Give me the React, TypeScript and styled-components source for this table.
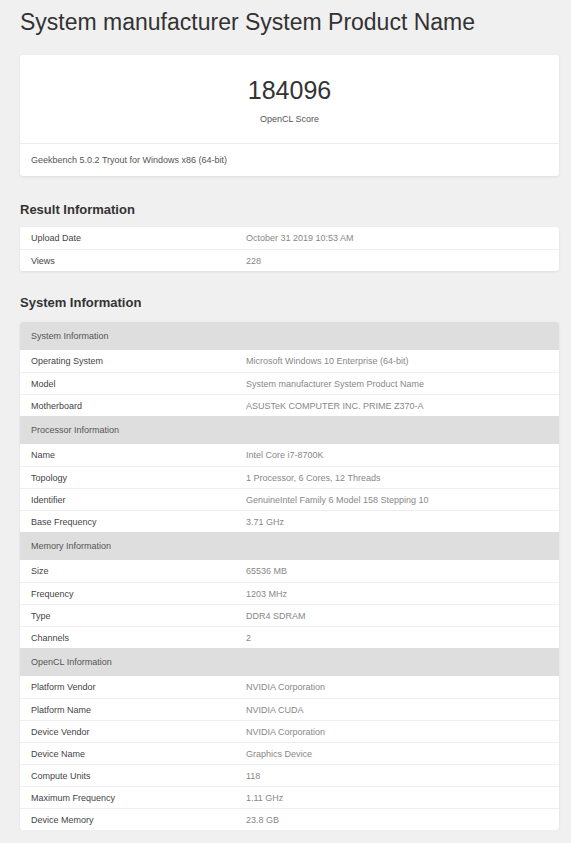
import React from 'react';
import styled, { createGlobalStyle } from 'styled-components';

const GlobalStyle = createGlobalStyle`
    body {
        margin: 0;
        background: #f0f0f0;
        font-family: "Liberation Sans", Arial, sans-serif;
    }
`;

const Page = styled.div`
    padding: 8px 12px 0 20px;
`;

const Title = styled.h1`
    margin: 0;
    font-size: 23px;
    font-weight: 400;
    line-height: 28px;
    color: #333;
`;

const Card = styled.div<{ $top: number }>`
    margin-top: ${p => p.$top}px;
    background: #fff;
    border-radius: 3px;
    box-shadow: 0 1px 3px rgba(0, 0, 0, 0.08);
    overflow: hidden;
`;

const ScoreBlock = styled.div`
    padding: 20px 0 17px;
    display: flex;
    flex-direction: column;
    align-items: center;
`;

const Score = styled.div`
    font-size: 25px;
    line-height: 30px;
    color: #333;
`;

const ScoreLabel = styled.div`
    margin-top: 7px;
    font-size: 9px;
    line-height: 14px;
    color: #555;
`;

const CardFooter = styled.div`
    height: 32px;
    border-top: 1px solid #ececec;
    padding-left: 11px;
    display: flex;
    align-items: center;
    font-size: 9px;
    color: #555;
`;

const SectionHeading = styled.h2<{ $top: number }>`
    margin: ${p => p.$top}px 0 0;
    font-size: 13px;
    line-height: 16px;
    font-weight: 700;
    color: #333;
`;

const Row = styled.div`
    height: 22px;
    display: flex;
    align-items: center;
    font-size: 9px;
    border-top: 1px solid #eeeeee;
    box-sizing: border-box;

    &:first-child {
        border-top: none;
    }
`;

const GroupHeader = styled.div`
    height: 28px;
    display: flex;
    align-items: center;
    padding-left: 11px;
    background: #dedede;
    font-size: 9px;
    color: #555;
`;

const Label = styled.div`
    width: 215px;
    padding-left: 11px;
    box-sizing: border-box;
    flex-shrink: 0;
    color: #444;
`;

const Value = styled.div`
    padding-left: 11px;
    color: #888;
`;

type Item = [string, string];

const result: Item[] = [
    ['Upload Date', 'October 31 2019 10:53 AM'],
    ['Views', '228'],
];

const groups: { name: string; items: Item[] }[] = [
    {
        name: 'System Information',
        items: [
            ['Operating System', 'Microsoft Windows 10 Enterprise (64-bit)'],
            ['Model', 'System manufacturer System Product Name'],
            ['Motherboard', 'ASUSTeK COMPUTER INC. PRIME Z370-A'],
        ],
    },
    {
        name: 'Processor Information',
        items: [
            ['Name', 'Intel Core i7-8700K'],
            ['Topology', '1 Processor, 6 Cores, 12 Threads'],
            ['Identifier', 'GenuineIntel Family 6 Model 158 Stepping 10'],
            ['Base Frequency', '3.71 GHz'],
        ],
    },
    {
        name: 'Memory Information',
        items: [
            ['Size', '65536 MB'],
            ['Frequency', '1203 MHz'],
            ['Type', 'DDR4 SDRAM'],
            ['Channels', '2'],
        ],
    },
    {
        name: 'OpenCL Information',
        items: [
            ['Platform Vendor', 'NVIDIA Corporation'],
            ['Platform Name', 'NVIDIA CUDA'],
            ['Device Vendor', 'NVIDIA Corporation'],
            ['Device Name', 'Graphics Device'],
            ['Compute Units', '118'],
            ['Maximum Frequency', '1.11 GHz'],
            ['Device Memory', '23.8 GB'],
        ],
    },
];

const Rows = ({ items }: { items: Item[] }) => (
    <div>
        {items.map(([k, v]) => (
            <Row key={k}>
                <Label>{k}</Label>
                <Value>{v}</Value>
            </Row>
        ))}
    </div>
);

const App = () => (
    <Page>
        <GlobalStyle />
        <Title>System manufacturer System Product Name</Title>

        <Card $top={19}>
            <ScoreBlock>
                <Score>184096</Score>
                <ScoreLabel>OpenCL Score</ScoreLabel>
            </ScoreBlock>
            <CardFooter>Geekbench 5.0.2 Tryout for Windows x86 (64-bit)</CardFooter>
        </Card>

        <SectionHeading $top={26}>Result Information</SectionHeading>
        <Card $top={9}>
            <Rows items={result} />
        </Card>

        <SectionHeading $top={24}>System Information</SectionHeading>
        <Card $top={11}>
            {groups.map(g => (
                <React.Fragment key={g.name}>
                    <GroupHeader>{g.name}</GroupHeader>
                    <Rows items={g.items} />
                </React.Fragment>
            ))}
        </Card>
    </Page>
);

export default App;
